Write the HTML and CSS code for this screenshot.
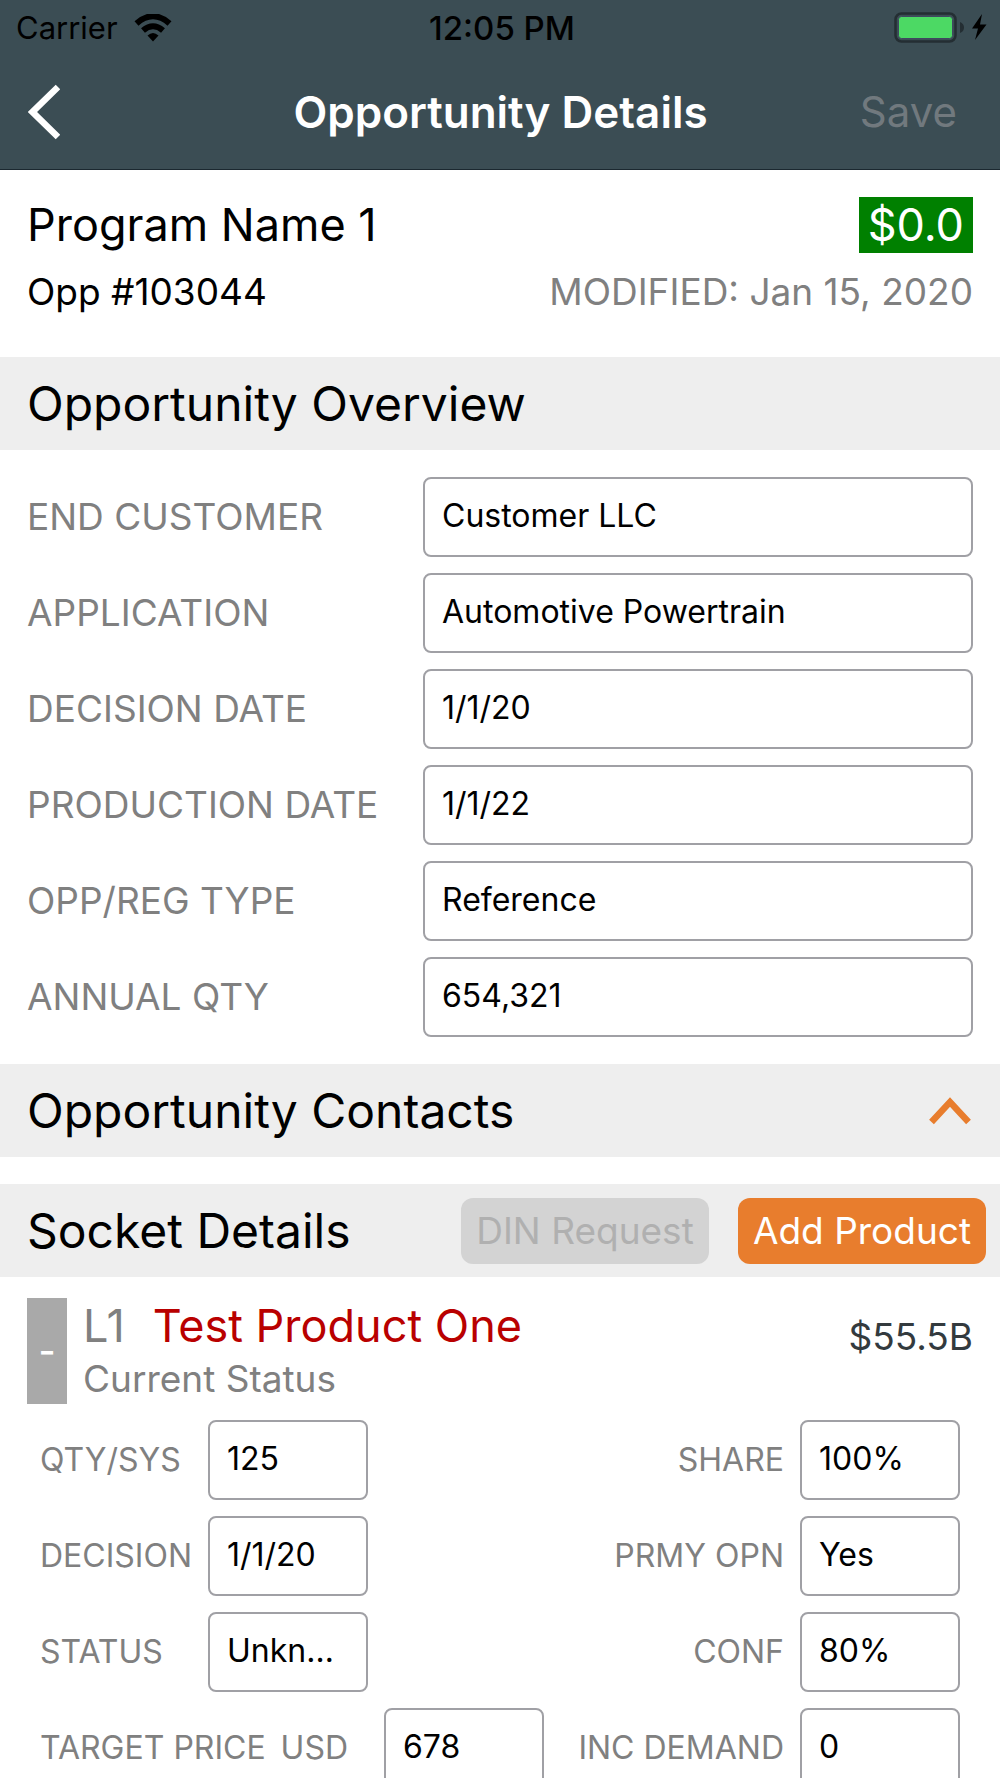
FILE: index.html
```html
<!DOCTYPE html>
<html lang="en">
<head>
<meta charset="utf-8">
<meta name="viewport" content="width=device-width, initial-scale=1">
<title>Opportunity Details</title>
<link rel="stylesheet" href="styles.css">
</head>
<body>
<div class="app">
  <header class="topbar">
    <div class="status">
      <div class="carrier">
        <span>Carrier</span>
        <svg class="wifi" viewBox="0 0 38 28" aria-hidden="true">
          <g fill="none" stroke="#000" stroke-width="6">
            <path d="M2.500 9.500Q19-5 35.500 9.500"/>
            <path d="M9 16.500Q19 8 29 16.500"/>
          </g>
          <path d="M13.500 21.500Q19 16.500 24.500 21.500L19 27.500Z"/>
        </svg>
      </div>
      <span class="clock">12:05 PM</span>
      <svg class="battery" viewBox="0 0 94 32" aria-hidden="true">
        <rect x="1.500" y="1.500" width="60" height="28" rx="6" fill="none" stroke="#242e33" stroke-width="2.500"/>
        <rect x="4.500" y="4.500" width="54" height="22" rx="3" fill="#4cd964" stroke="#3f4860" stroke-width="1"/>
        <path d="M66 10Q70 11.500 70 15.500T66 21Z" fill="#242e33"/>
        <path d="M88 2L78 16.500H84L81 28L92.500 12.500H86Z"/>
      </svg>
    </div>
    <nav class="navbar">
      <button class="back" type="button" aria-label="Back">
        <svg viewBox="0 0 32 56" aria-hidden="true"><path d="M30 3L4.500 28L30 53" fill="none" stroke="#fff" stroke-width="6.500"/></svg>
      </button>
      <h1>Opportunity Details</h1>
      <button class="save" type="button" disabled>Save</button>
    </nav>
  </header>

  <main>
    <section class="summary">
      <div class="line">
        <h2 class="program">Program Name 1</h2>
        <span class="amount">$0.0</span>
      </div>
      <div class="line">
        <span>Opp #103044</span>
        <span class="muted">MODIFIED: Jan 15, 2020</span>
      </div>
    </section>

    <section>
      <div class="bar"><h2>Opportunity Overview</h2></div>
      <form class="overview">
        <label for="customer">END CUSTOMER</label><input id="customer" type="text" value="Customer LLC">
        <label for="application">APPLICATION</label><input id="application" type="text" value="Automotive Powertrain">
        <label for="decision-date">DECISION DATE</label><input id="decision-date" type="text" value="1/1/20">
        <label for="production-date">PRODUCTION DATE</label><input id="production-date" type="text" value="1/1/22">
        <label for="type">OPP/REG TYPE</label><input id="type" type="text" value="Reference">
        <label for="annual">ANNUAL QTY</label><input id="annual" type="text" value="654,321">
      </form>
    </section>

    <section class="contacts">
      <div class="bar">
        <h2>Opportunity Contacts</h2>
        <button class="collapse" type="button" aria-label="Toggle contacts">
          <svg viewBox="0 0 42 28" aria-hidden="true"><path d="M2.500 25L21 5L39.500 25" fill="none" stroke="#e87d2d" stroke-width="6.500"/></svg>
        </button>
      </div>
    </section>

    <section>
      <div class="bar">
        <h2>Socket Details</h2>
        <div class="actions">
          <button type="button" disabled>DIN Request</button>
          <button type="button" class="primary">Add Product</button>
        </div>
      </div>
      <article class="product">
        <div class="product-head">
          <button class="fold" type="button" aria-label="Collapse product">-</button>
          <div class="product-name">
            <h3><span class="muted">L1</span><a href="#product">Test Product One</a></h3>
            <span class="muted">Current Status</span>
          </div>
          <span class="value">$55.5B</span>
        </div>
        <form class="specs">
          <div class="pair"><label for="qty">QTY/SYS</label><input id="qty" type="text" value="125"></div>
          <div class="pair end"><label for="share">SHARE</label><input id="share" type="text" value="100%"></div>
          <div class="pair"><label for="decision">DECISION</label><input id="decision" type="text" value="1/1/20"></div>
          <div class="pair end"><label for="primary">PRMY OPN</label><input id="primary" type="text" value="Yes"></div>
          <div class="pair"><label for="status">STATUS</label><input id="status" type="text" value="Unknown"></div>
          <div class="pair end"><label for="conf">CONF</label><input id="conf" type="text" value="80%"></div>
          <div class="pair wide"><label for="price">TARGET PRICE <span class="unit">USD</span></label><input id="price" type="text" value="678"></div>
          <div class="pair end"><label for="demand">INC DEMAND</label><input id="demand" type="text" value="0"></div>
        </form>
      </article>
    </section>
  </main>
</div>
</body>
</html>
```
FILE: styles.css
```css
* { box-sizing: border-box; }

body {
  margin: 0;
  background: #fff;
  color: #000;
  font: 400 37px/44px Inter, "Liberation Sans", sans-serif;
}

h1, h2, h3 { margin: 0; font-weight: inherit; }

button, input { font: inherit; margin: 0; }

button { padding: 0; border: 0; background: none; }

svg { display: block; }

.app {
  display: flex;
  flex-direction: column;
  height: 100vh;
}

.topbar {
  flex: none;
  background: #3b4d54;
  border-bottom: 1px solid #1b2830;
}

.status {
  display: grid;
  grid-template-columns: 1fr auto 1fr;
  align-items: center;
  height: 56px;
  padding: 0 12px 0 16px;
  font-size: 31px;
}

.carrier { display: flex; align-items: center; gap: 16px; }

.wifi { width: 38px; height: 28px; }

.clock { font-size: 33px; font-weight: 500; }

.battery { width: 94px; height: 32px; justify-self: end; }

.navbar {
  display: grid;
  grid-template-columns: 1fr auto 1fr;
  align-items: center;
  height: 113px;
  padding: 0 43px 2px 28px;
  color: #fff;
  font-size: 42px;
}

/* the side paddings differ, so pull the title back to the window's centre */
.navbar h1 { margin: 0 -8px 0 8px; font-size: 44px; font-weight: 600; }

.back { justify-self: start; }

.back svg { width: 32px; height: 56px; }

.save { justify-self: end; color: #71797e; }

main {
  flex: 1;
  min-height: 0;
  overflow-y: auto;
  scrollbar-width: none;
}

.summary {
  display: grid;
  gap: 17px;
  padding: 27px 27px 43px;
}

.line {
  display: flex;
  align-items: center;
  justify-content: space-between;
}

.program { font-size: 45px; line-height: 56px; }

.amount {
  padding: 0 9px;
  background: #008000;
  color: #fff;
  font-size: 45px;
  line-height: 56px;
}

.muted, label { color: #808080; }

.bar {
  display: flex;
  align-items: center;
  justify-content: space-between;
  min-height: 93px;
  padding: 0 27px;
  background: #eee;
}

.bar h2 { font-size: 48px; line-height: 56px; }

input {
  width: 100%;
  height: 80px;
  padding: 0 17px 4px;
  border: 2px solid #a0a0a5;
  border-radius: 8px;
  background: #fff;
  color: #000;
  font-size: 32px;
  text-overflow: ellipsis;
}

.overview {
  display: grid;
  grid-template-columns: 380px 1fr;
  gap: 16px;
  align-items: center;
  padding: 27px;
}

.contacts { margin-bottom: 27px; }

.collapse { margin-right: 2px; }

.collapse svg { width: 42px; height: 28px; }

.actions {
  display: flex;
  gap: 29px;
  margin-right: -13px;
}

.actions button {
  width: 248px;
  height: 66px;
  border-radius: 12px;
  background: #d3d3d3;
  color: #b0b0b0;
}

.actions .primary { background: #e87d2d; color: #fff; }

.product { padding: 21px 27px 0; }

.product-head { display: flex; align-items: stretch; gap: 16px; }

.fold {
  width: 40px;
  background: #a9a9a9;
  color: #fff;
  font-weight: 500;
}

.product-name { flex: 1; }

.product-name h3 {
  display: flex;
  gap: 28px;
  font-size: 45px;
  line-height: 56px;
}

.product-name > .muted { display: block; line-height: 50px; }

.product-name a { color: #b90000; text-decoration: none; }

.value { align-self: center; padding-bottom: 28px; color: #333a3e; }

.specs {
  display: grid;
  grid-template-columns: 1fr 1fr;
  gap: 16px 0;
  padding: 16px 13px 27px;
}

.pair {
  display: grid;
  grid-template-columns: 152px 160px;
  column-gap: 16px;
  align-items: center;
  font-size: 32px;
}

.pair.wide { grid-template-columns: 328px 160px; }

.pair.end { grid-template-columns: 1fr 160px; text-align: right; }

.unit { margin-left: 6px; }
```
